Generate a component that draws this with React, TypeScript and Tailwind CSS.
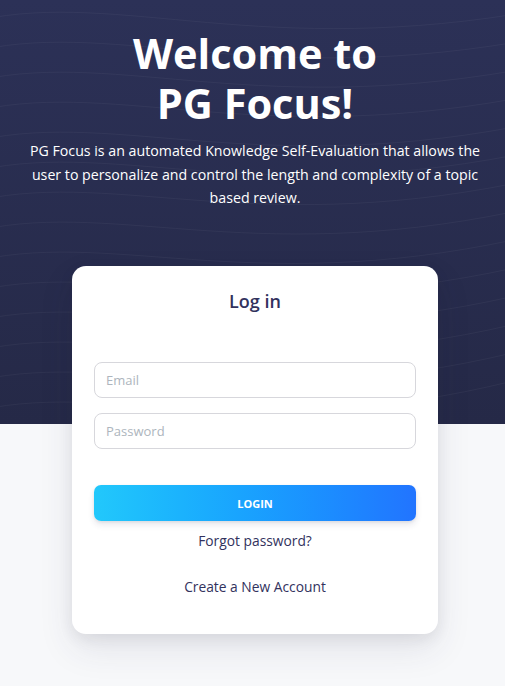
import React from "react";

function Waves() {
  const lines = Array.from({ length: 14 }, (_, i) => i);
  return (
    <svg
      className="absolute inset-0 h-full w-full opacity-[0.04]"
      viewBox="0 0 505 424"
      preserveAspectRatio="none"
    >
      {lines.map((i) => (
        <path
          key={i}
          d={`M-20 ${20 + i * 30} C 120 ${i * 30 - 10}, 260 ${60 + i * 30}, 540 ${10 + i * 28}`}
          fill="none"
          stroke="#ffffff"
          strokeWidth="1"
        />
      ))}
    </svg>
  );
}

export default function App() {
  return (
    <div
      className="min-h-[686px] bg-[#f7f8fa]"
      style={{ fontFamily: '"Open Sans", "Noto Sans", sans-serif' }}
    >
      {/* Hero */}
      <div className="relative h-[424px] bg-gradient-to-b from-[#2c3157] to-[#252947] overflow-hidden">
        <Waves />
        <div className="relative pt-[28px] pl-[20px] pr-[15px] text-center">
          <h1 className="text-[41.5px] leading-[50px] font-bold text-white">
            <div>Welcome to</div>
            <div>PG Focus!</div>
          </h1>
          <p className="mt-[11px] text-[14.2px] leading-[23.5px] text-white">
            PG Focus is an automated Knowledge Self-Evaluation that allows the
            user to personalize and control the length and complexity of a topic
            based review.
          </p>
        </div>
      </div>

      {/* Card */}
      <div className="relative -mt-[158px] flex justify-center pl-[5px] pb-[52px]">
        <div className="w-[366px] h-[368px] rounded-[14px] bg-white shadow-[0_15px_35px_rgba(50,50,93,0.1),0_5px_15px_rgba(0,0,0,0.07)] px-[22px] pt-[22px]">
          <h2 className="text-center text-[18px] font-semibold text-[#32325d]">
            Log in
          </h2>
          <div className="mt-[47px] flex flex-col gap-[15px]">
            <input
              placeholder="Email"
              className="h-[36px] w-full rounded-[8px] border border-[#d7d7dc] px-[11px] text-[13px] text-[#525f7f] placeholder:text-[#adb5bd] outline-none"
            />
            <input
              placeholder="Password"
              type="password"
              className="h-[36px] w-full rounded-[8px] border border-[#d7d7dc] px-[11px] text-[13px] text-[#525f7f] placeholder:text-[#adb5bd] outline-none"
            />
          </div>
          <button className="mt-[36px] h-[36px] w-full rounded-[7px] bg-gradient-to-r from-[#22c8fb] to-[#2274ff] pt-[2px] text-[11px] font-bold text-white shadow-[0_4px_6px_rgba(50,50,93,0.11),0_1px_3px_rgba(0,0,0,0.08)]">
            LOGIN
          </button>
          <div className="mt-[10px] text-center text-[13.8px] text-[#32325d]">
            Forgot password?
          </div>
          <div className="mt-[25px] text-center text-[13.8px] text-[#32325d]">
            Create a New Account
          </div>
        </div>
      </div>
    </div>
  );
}
